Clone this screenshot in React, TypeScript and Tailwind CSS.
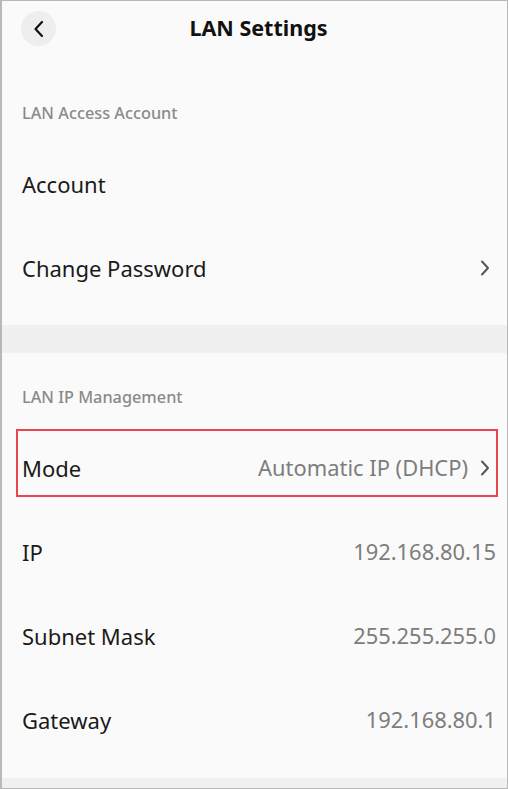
import React from "react";

const Chevron = () => (
  <svg width="12" height="16" viewBox="0 0 12 16" fill="none" className="shrink-0">
    <path d="M3 1.5 L9 8 L3 14.5" stroke="#555" strokeWidth="2" strokeLinecap="round" strokeLinejoin="round" />
  </svg>
);

function Row({ label, value, chevron, children }: { label: string; value?: string; chevron?: boolean; children?: React.ReactNode }) {
  return (
    <div className="relative flex h-[84px] items-center justify-between pl-[20px] pr-[11px]">
      {children}
      <span className="text-[22px] text-[#1a1a1a]">{label}</span>
      <div className="flex items-center">
        {value && <span className="text-[21.9px] text-[#7d7d7d]">{value}</span>}
        {chevron && (
          <span className={value ? "ml-[11px] mr-[5px]" : "mr-[5px]"}>
            <Chevron />
          </span>
        )}
      </div>
    </div>
  );
}

export default function App() {
  return (
    <div
      className="box-border flex h-[789px] w-[508px] flex-col overflow-hidden border-b border-l-2 border-r border-t border-[#b8b8b8] bg-[#fafafa]"
      style={{ fontFamily: '"Noto Sans", "Open Sans", sans-serif' }}
    >
      <header className="relative flex h-[55px] items-center justify-center">
        <div className="absolute left-[19px] top-[10px] flex h-[35px] w-[35px] items-center justify-center rounded-full bg-[#eeeeee]">
          <svg width="14" height="18" viewBox="0 0 14 18" fill="none">
            <path d="M10 2 L3.5 9 L10 16" stroke="#111" strokeWidth="2.2" strokeLinecap="round" strokeLinejoin="round" />
          </svg>
        </div>
        <h1 className="pl-[8px] text-[21.5px] font-bold text-[#111]">LAN Settings</h1>
      </header>

      <div className="flex h-[86px] items-end pb-[17px] pl-[20px]">
        <span className="text-[16.3px] font-medium text-[#8a8a8a]">LAN Access Account</span>
      </div>
      <Row label="Account" />
      <Row label="Change Password" chevron />
      <div className="h-[15px]" />
      <div className="h-[28px] bg-[#f0f0f0]" />

      <div className="flex h-[73px] items-end pb-[17px] pl-[20px]">
        <span className="text-[16.3px] font-medium text-[#8a8a8a]">LAN IP Management</span>
      </div>
      <Row label="Mode" value="Automatic IP (DHCP)" chevron>
        <div className="pointer-events-none absolute left-[14px] right-[9px] top-[3px] h-[68px] border-2 border-[#e8464f]" />
      </Row>
      <Row label="IP" value="192.168.80.15" />
      <Row label="Subnet Mask" value="255.255.255.0" />
      <Row label="Gateway" value="192.168.80.1" />
      <div className="h-[16px]" />
      <div className="flex-1 bg-[#f0f0f0]" />
    </div>
  );
}
